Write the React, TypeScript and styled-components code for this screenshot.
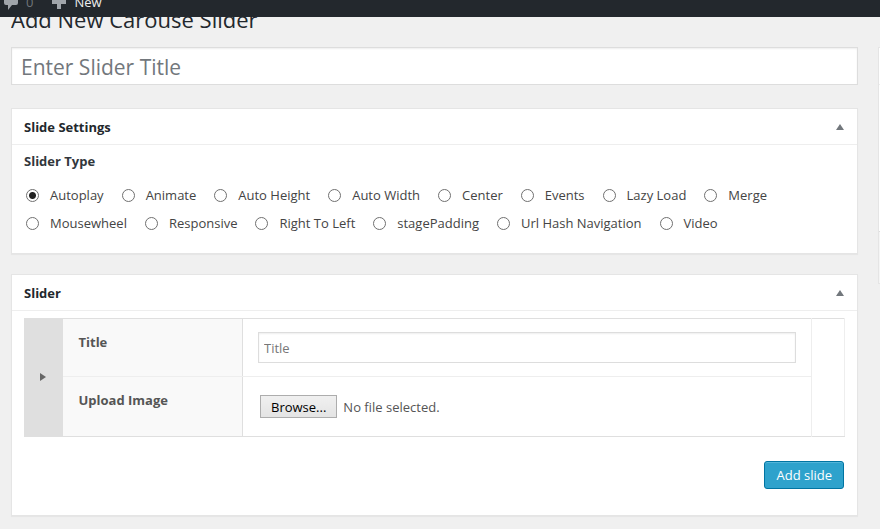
import React, { useState } from "react";
import styled, { createGlobalStyle } from "styled-components";

const GlobalStyle = createGlobalStyle`
  * { box-sizing: border-box; }
  body {
    margin: 0;
    background: #f0f0f0;
    color: #444;
    font-family: "Open Sans", "Noto Sans", sans-serif;
    font-size: 13px;
    line-height: 18px;
    overflow: hidden;
  }
`;

const AdminBar = styled.header`
  display: flex;
  align-items: flex-end;
  gap: 18px;
  height: 17px;
  padding-left: 3px;
  overflow: hidden;
  background: #23282d;
`;

const BarLink = styled.a<{ $dim?: boolean }>`
  display: flex;
  align-items: center;
  gap: 7px;
  height: 30px;
  color: ${(p) => (p.$dim ? "#6f757a" : "#eee")};
  text-decoration: none;
`;

const BarIcon = styled.svg`
  width: 16px;
  height: 16px;
  fill: #a0a5aa;
`;

const Columns = styled.div`
  display: flex;
  gap: 20px;
  padding-left: 11px;
`;

const Main = styled.main`
  flex: 1;
  min-width: 0;
`;

const Heading = styled.div`
  display: flex;
  align-items: flex-end;
  height: 17px;
  overflow: hidden;
`;

const PageTitle = styled.h1`
  margin: 0;
  color: #23282d;
  font-size: 22px;
  font-weight: 400;
  line-height: 30px;
  white-space: nowrap;
`;

const TitleInput = styled.input`
  display: block;
  width: 100%;
  height: 38px;
  margin: 13px 0 23px;
  padding: 4px 9px 2px;
  border: 1px solid #ddd;
  background: #fff;
  box-shadow: inset 0 1px 2px rgba(0, 0, 0, 0.07);
  color: #32373c;
  font: inherit;
  font-size: 21px;
  &::placeholder { color: #72777c; opacity: 1; }
`;

const Panel = styled.section`
  margin-bottom: 20px;
  border: 1px solid #e5e5e5;
  background: #fff;
  box-shadow: 0 1px 1px rgba(0, 0, 0, 0.04);
`;

const PanelHeader = styled.div`
  display: flex;
  align-items: center;
  justify-content: space-between;
  height: 36px;
  padding: 0 12px;
  border-bottom: 1px solid #eee;
`;

const PanelTitle = styled.h2`
  margin: 0;
  color: #23282d;
  font-size: 13px;
  font-weight: 700;
`;

const Toggle = styled.button`
  display: flex;
  padding: 0;
  border: 0;
  background: none;
  svg { width: 10px; height: 8px; fill: #72777c; }
`;

const TypeGroup = styled.fieldset`
  min-width: 0;
  margin: 0;
  padding: 7px 12px 16px;
  border: 0;
`;

const TypeLegend = styled.legend`
  float: left;
  width: 100%;
  padding: 0;
  margin-bottom: 11px;
  color: #32373c;
  font-weight: 700;
`;

const TypeList = styled.div`
  clear: both;
  display: flex;
  flex-wrap: wrap;
  gap: 0 16px;
  max-width: 780px;
`;

const TypeOption = styled.label`
  display: flex;
  align-items: center;
  gap: 11px;
  height: 28px;
  padding-left: 2px;
`;

const Radio = styled.input`
  appearance: none;
  width: 13px;
  height: 13px;
  margin: 0;
  border: 1px solid #707070;
  border-radius: 50%;
  background: #fff;
  &:checked { background: radial-gradient(circle, #222 3px, #fff 4px); }
`;

const SliderBody = styled.div`
  padding: 7px 12px 26px;
`;

const SlideTable = styled.table`
  width: 100%;
  border: 1px solid #dfdfdf;
  border-right-color: #eee;
  border-collapse: collapse;
  table-layout: fixed;
`;

const HandleCell = styled.td`
  width: 38px;
  padding: 0;
  background: #dfdfdf;
`;

const HandleButton = styled.button`
  display: block;
  margin: 0 auto 2px 15px;
  padding: 0;
  border: 0;
  background: none;
  svg { display: block; width: 6px; height: 8px; fill: #666; }
`;

const LabelCell = styled.th<{ $last?: boolean }>`
  width: 180px;
  height: ${(p) => (p.$last ? 60 : 58)}px;
  padding: 14px 16px;
  border-right: 1px solid #dfdfdf;
  border-bottom: 1px solid ${(p) => (p.$last ? "#dfdfdf" : "#eee")};
  background: #f9f9f9;
  color: #555;
  font-weight: 700;
  text-align: left;
  vertical-align: top;
`;

const FieldCell = styled.td<{ $last?: boolean }>`
  padding: 0 15px;
  border-bottom: 1px solid ${(p) => (p.$last ? "#dfdfdf" : "#eee")};
`;

const EndCell = styled.td`
  width: 33px;
  border-left: 1px solid #eee;
`;

const TextInput = styled.input`
  display: block;
  width: 100%;
  height: 31px;
  padding: 3px 5px;
  border: 1px solid #ddd;
  background: #fff;
  box-shadow: inset 0 1px 2px rgba(0, 0, 0, 0.07);
  color: #32373c;
  font: inherit;
  &::placeholder { color: #777; opacity: 1; }
`;

const FilePicker = styled.div`
  display: flex;
  align-items: center;
  gap: 6px;
  padding-left: 2px;
  color: #555;
`;

const BrowseButton = styled.button`
  height: 23px;
  padding: 0 10px;
  border: 1px solid #adadad;
  background: linear-gradient(#f0f0f0, #e4e4e4);
  color: #000;
  font: inherit;
  line-height: 20px;
`;

const Actions = styled.div`
  display: flex;
  justify-content: flex-end;
  padding: 24px 1px 0 0;
`;

const PrimaryButton = styled.button`
  height: 28px;
  padding: 0 11px;
  border: 1px solid #0074a2;
  border-radius: 3px;
  background: #2ea2cc;
  box-shadow: inset 0 1px 0 rgba(120, 200, 230, 0.5);
  color: #fff;
  font: inherit;
`;

const Sidebar = styled.aside`
  flex: 0 0 2px;
  overflow: hidden;
  padding-top: 30px;
`;

const SideBox = styled.div`
  width: 280px;
  border: 1px solid #e5e5e5;
  background: #fff;
`;

const SideHead = styled.div`
  height: 37px;
  border-bottom: 1px solid #eee;
`;

const SideContent = styled.div`
  height: 146px;
`;

const SideFoot = styled.div`
  height: 52px;
  border-top: 1px solid #ddd;
  background: #f5f5f5;
`;

const sliderTypes = [
  "Autoplay", "Animate", "Auto Height", "Auto Width", "Center", "Events", "Lazy Load", "Merge",
  "Mousewheel", "Responsive", "Right To Left", "stagePadding", "Url Hash Navigation", "Video",
];

function PanelTop({ title }: { title: string }) {
  return (
    <PanelHeader>
      <PanelTitle>{title}</PanelTitle>
      <Toggle type="button" aria-label={`Toggle ${title}`}>
        <svg viewBox="0 0 10 8"><path d="M5 1 9 7H1Z" /></svg>
      </Toggle>
    </PanelHeader>
  );
}

export default function App() {
  const [type, setType] = useState("Autoplay");
  return (
    <>
      <GlobalStyle />
      <AdminBar>
        <BarLink href="#comments" $dim>
          <BarIcon viewBox="0 0 16 16"><path d="M3 1h10q2 0 2 2v6q0 2-2 2H9l-4 5v-5H3q-2 0-2-2V3q0-2 2-2z" /></BarIcon>
          <span>0</span>
        </BarLink>
        <BarLink href="#new">
          <BarIcon viewBox="0 0 16 16"><path d="M6 2h4v4h5v4h-5v5H6v-5H1V6h5z" /></BarIcon>
          <span>New</span>
        </BarLink>
      </AdminBar>
      <Columns>
        <Main>
          <Heading><PageTitle>Add New Carouse Slider</PageTitle></Heading>
          <TitleInput type="text" aria-label="Slider title" placeholder="Enter Slider Title" />
          <Panel>
            <PanelTop title="Slide Settings" />
            <TypeGroup>
              <TypeLegend>Slider Type</TypeLegend>
              <TypeList>
                {sliderTypes.map((name) => (
                  <TypeOption key={name}>
                    <Radio type="radio" name="slider-type" checked={type === name} onChange={() => setType(name)} />
                    {name}
                  </TypeOption>
                ))}
              </TypeList>
            </TypeGroup>
          </Panel>
          <Panel>
            <PanelTop title="Slider" />
            <SliderBody>
              <SlideTable>
                <tbody>
                  <tr>
                    <HandleCell rowSpan={2}>
                      <HandleButton type="button" aria-label="Expand slide">
                        <svg viewBox="0 0 6 8"><path d="M0 0 6 4 0 8Z" /></svg>
                      </HandleButton>
                    </HandleCell>
                    <LabelCell scope="row"><label htmlFor="slide-title">Title</label></LabelCell>
                    <FieldCell><TextInput id="slide-title" type="text" placeholder="Title" /></FieldCell>
                    <EndCell rowSpan={2} />
                  </tr>
                  <tr>
                    <LabelCell scope="row" id="upload-label" $last>Upload Image</LabelCell>
                    <FieldCell $last>
                      <FilePicker>
                        <BrowseButton type="button" aria-describedby="upload-label">Browse...</BrowseButton>
                        <span>No file selected.</span>
                      </FilePicker>
                    </FieldCell>
                  </tr>
                </tbody>
              </SlideTable>
              <Actions><PrimaryButton type="button">Add slide</PrimaryButton></Actions>
            </SliderBody>
          </Panel>
        </Main>
        <Sidebar>
          <SideBox><SideHead /><SideContent /><SideFoot /></SideBox>
        </Sidebar>
      </Columns>
    </>
  );
}
